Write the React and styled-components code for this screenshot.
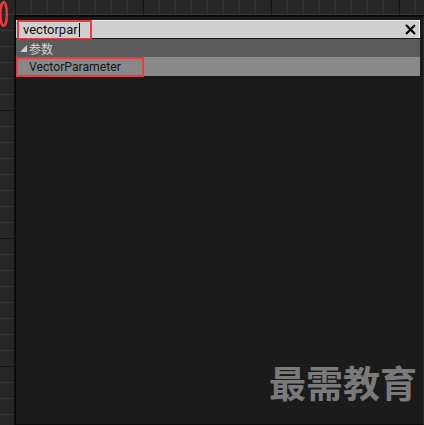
import React from 'react';
import styled, { createGlobalStyle } from 'styled-components';

const GlobalStyle = createGlobalStyle`
  html, body {
    margin: 0;
    padding: 0;
    background: #262626;
    overflow: hidden;
  }
  * {
    box-sizing: border-box;
  }
`;

// the graph editor grid behind the popup
const Screen = styled.div`
  position: relative;
  width: 424px;
  height: 425px;
  display: flex;
  padding: 15px 0 0 14px;
  background-color: #262626;
  background-image:
    linear-gradient(to right, #141414 1px, transparent 1px),
    linear-gradient(to bottom, #141414 1px, transparent 1px),
    linear-gradient(to right, #313131 1px, transparent 1px),
    linear-gradient(to bottom, #363636 1px, transparent 1px);
  background-size: 128px 128px, 128px 128px, 16px 16px, 16px 16px;
  background-position: 15px 110px, 15px 110px, 15px 14px, 15px 14px;
  font-family: Roboto, "Noto Sans CJK SC", sans-serif;
`;

const Panel = styled.div`
  flex: 1;
  display: flex;
  flex-direction: column;
  background: #1b1b1b;
  border-left: 2px solid #0b0b0b;
  border-top: 2px solid #0b0b0b;
  border-right: 1px solid #2a2a2a;
  border-bottom: 1px solid #0b0b0b;
  padding: 3px 3px 0 0;
`;

const SearchBar = styled.div`
  height: 18px;
  display: flex;
  align-items: center;
  justify-content: space-between;
  background: #cfcfcf;
  border-top: 1px solid #ececec;
  border-right: 1px solid #f4f4f4;
  margin-bottom: 1px;
`;

const Marked = styled.div`
  display: flex;
  align-items: center;
  width: ${p => p.$w}px;
  height: 20px;
  margin-left: ${p => p.$ml || 0}px;
  padding-left: ${p => p.$pl}px;
  border: 2px solid #ec3b40;
  flex-shrink: 0;
`;

const Query = styled.span`
  font-size: 13px;
  color: #111;
  line-height: 14px;
`;

const Caret = styled.span`
  width: 1px;
  height: 14px;
  background: #000;
  margin-left: 1px;
`;

const CloseButton = styled.svg`
  width: 11px;
  height: 11px;
  margin-right: 3px;
`;

const CategoryRow = styled.div`
  height: 18px;
  display: flex;
  align-items: center;
  gap: 2px;
  padding-left: 4px;
  background: #5b5b5b;
  color: #d6d6d6;
  font-size: 12px;
  font-family: "Noto Sans CJK SC", sans-serif;
`;

const Arrow = styled.svg`
  width: 7px;
  height: 7px;
`;

const ItemRow = styled.div`
  height: 19px;
  display: flex;
  align-items: center;
  background: #898989;
`;

const ItemText = styled.span`
  font-size: 12.2px;
  color: #141414;
`;

const Watermark = styled.div`
  margin-top: auto;
  align-self: flex-end;
  margin-right: 3px;
  margin-bottom: 23px;
  font-family: "Noto Sans CJK SC", sans-serif;
  font-weight: 700;
  font-size: 37px;
  line-height: 1;
  color: #7a7a7a;
`;

// red annotation ring cut by the left edge
const Ring = styled.svg`
  position: absolute;
  left: 0;
  top: 0;
  width: 10px;
  height: 30px;
`;

const App = () => {
  return (
    <>
      <GlobalStyle />
      <Screen>
        <Ring viewBox="0 0 10 30">
          <ellipse cx="3.6" cy="14" rx="3.2" ry="11.8" fill="none" stroke="#f03a3a" strokeWidth="2.4" />
        </Ring>
        <Panel>
          <SearchBar>
            <Marked $w={75} $ml={1} $pl={4}>
              <Query>vectorpar</Query>
              <Caret />
            </Marked>
            <CloseButton viewBox="0 0 11 11">
              <path d="M1 1 L10 10 M10 1 L1 10" stroke="#000" strokeWidth="2" />
            </CloseButton>
          </SearchBar>
          <CategoryRow>
            <Arrow viewBox="0 0 7 7">
              <polygon points="7,0 7,7 0,7" fill="#cfcfcf" />
            </Arrow>
            参数
          </CategoryRow>
          <ItemRow>
            <Marked $w={128} $pl={11}>
              <ItemText>VectorParameter</ItemText>
            </Marked>
          </ItemRow>
          <Watermark>最需教育</Watermark>
        </Panel>
      </Screen>
    </>
  );
};

export default App;
